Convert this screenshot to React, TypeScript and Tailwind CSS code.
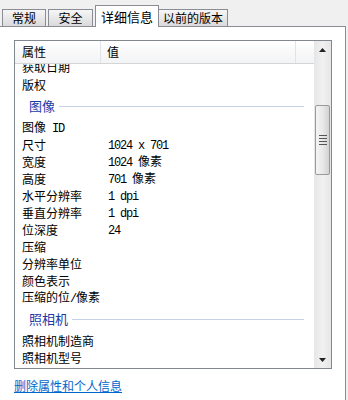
import React from 'react';

const CJK = "font-['Noto_Sans_CJK_SC','Noto_Sans',sans-serif]";

type Row = { name: string; value?: string } | { group: string };

const rows: Row[] = [
  { name: '获取日期' },
  { name: '版权' },
  { group: '图像' },
  { name: '图像 ID' },
  { name: '尺寸', value: '1024 x 701' },
  { name: '宽度', value: '1024 像素' },
  { name: '高度', value: '701 像素' },
  { name: '水平分辨率', value: '1 dpi' },
  { name: '垂直分辨率', value: '1 dpi' },
  { name: '位深度', value: '24' },
  { name: '压缩' },
  { name: '分辨率单位' },
  { name: '颜色表示' },
  { name: '压缩的位/像素' },
  { group: '照相机' },
  { name: '照相机制造商' },
  { name: '照相机型号' },
];

// ascii bits look like the half-width bitmap font, so they get the mono face
const Mixed: React.FC<{ text: string }> = ({ text }) => {
  const parts = text.match(/[\x20-\x7e]+|[^\x20-\x7e]+/g) || [];
  return (
    <>
      {parts.map((p, i) =>
        /^[\x20-\x7e]+$/.test(p) && /[A-Za-z0-9/]/.test(p) ? (
          <span key={i} className="font-['Liberation_Mono',monospace] text-[12px] tracking-[-1.2px] whitespace-pre">
            {p}
          </span>
        ) : (
          <span key={i} className="whitespace-pre">{p}</span>
        )
      )}
    </>
  );
};

const Tab: React.FC<{ label: string; active?: boolean; className?: string }> = ({ label, active, className = '' }) =>
  active ? (
    <div className={`relative z-10 -mb-px h-[22px] bg-white border border-b-0 border-[#898c95] flex items-center justify-center text-[13px] text-black ${className}`}>
      {label}
    </div>
  ) : (
    <div className={`h-[17px] bg-gradient-to-b from-[#f6f6f6] to-[#dadada] border border-b-0 border-[#898c95] flex items-center justify-center text-[12px] text-black ${className}`}>
      {label}
    </div>
  );

const ScrollBar: React.FC = () => (
  <div className="w-[17px] flex flex-col bg-gradient-to-r from-[#e6e6e6] via-[#f1f1f1] to-[#e6e6e6]">
    <div className="h-[17px] flex items-center justify-center">
      <svg width="7" height="4" viewBox="0 0 7 4">
        <path d="M3.5 0 L7 4 L0 4 Z" fill="#222" />
      </svg>
    </div>
    <div className="flex-1 pt-[47px] px-[1px]">
      <div className="h-[70px] rounded-[2px] border border-[#9a9a9a] bg-gradient-to-r from-[#f4f4f4] via-[#e9e9e9] to-[#d2d2d2] flex flex-col items-center justify-center gap-[2px]">
        <div className="w-[8px] h-px bg-[#555]" />
        <div className="w-[8px] h-px bg-[#555]" />
        <div className="w-[8px] h-px bg-[#555]" />
        <div className="w-[8px] h-px bg-[#555]" />
      </div>
    </div>
    <div className="h-[17px] flex items-center justify-center">
      <svg width="7" height="4" viewBox="0 0 7 4">
        <path d="M0 0 L7 0 L3.5 4 Z" fill="#222" />
      </svg>
    </div>
  </div>
);

export default function App() {
  return (
    <div className={`w-[348px] h-[400px] bg-[#f0f0f0] flex flex-col ${CJK}`}>
      {/* tabs */}
      <div className="h-[26px] flex items-end pl-[2px] gap-[2px]">
        <Tab label="常规" className="w-[44px]" />
        <Tab label="安全" className="w-[45px]" />
        <div className="flex items-end">
          <Tab label="详细信息" active className="w-[64px]" />
          <Tab label="以前的版本" className="w-[70px] -ml-px" />
        </div>
      </div>

      {/* panel */}
      <div className="w-[346px] flex-1 bg-white border-t border-r border-[#898c95] pt-[13px] pl-[14px]">
        <div className="w-[318px] h-[329px] border border-[#828790] flex">
          <div className="flex-1 flex flex-col min-w-0">
            <div className="h-[23px] shrink-0 flex border-b border-[#d5d5d5] bg-gradient-to-b from-white to-[#f2f3f5] text-[12px] text-black">
              <div className="w-[86px] border-r border-[#e2e3e6] pl-[7px] flex items-center">属性</div>
              <div className="w-[195px] border-r border-[#e2e3e6] pl-[6px] flex items-center">值</div>
              <div className="flex-1" />
            </div>
            <div className="flex-1 overflow-hidden">
              <div className="-mt-[6px]">
                {rows.map((r, i) =>
                  'group' in r ? (
                    <div key={i} className="h-[26px] flex items-center pl-[14px] pr-[10px]">
                      <span className="text-[13px] text-[#1e3aa8]">{r.group}</span>
                      <div className="flex-1 h-px bg-[#c7d1e8] ml-[4px]" />
                    </div>
                  ) : (
                    <div key={i} className={`${i === 0 ? 'h-[18px]' : 'h-[17px]'} flex items-center text-[12px] text-black leading-none`}>
                      <div className="w-[86px] pl-[7px] whitespace-nowrap">
                        <Mixed text={r.name} />
                      </div>
                      <div className="pl-[7px] whitespace-nowrap">{r.value && <Mixed text={r.value} />}</div>
                    </div>
                  )
                )}
              </div>
            </div>
          </div>
          <ScrollBar />
        </div>
        <div className="mt-[7px] leading-[17px]">
          <a href="#" className="text-[12px] text-[#0066cc] underline">删除属性和个人信息</a>
        </div>
      </div>
    </div>
  );
}
